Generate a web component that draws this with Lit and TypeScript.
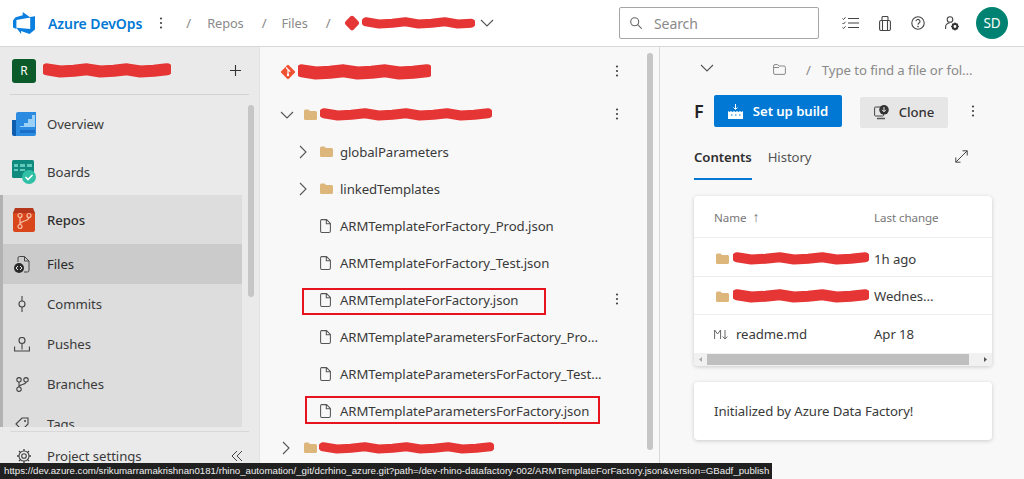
import { LitElement, html, css, svg } from "lit";
import { customElement } from "lit/decorators.js";

const icon = (w: number, h: number, body: unknown, cls = "") =>
  html`<svg class="ic ${cls}" width=${w} height=${h} viewBox="0 0 ${w} ${h}" fill="none">${body}</svg>`;

const scribble = (w: number, h = 13) => {
  const m = h / 2;
  const pts: string[] = [];
  const n = Math.floor(w / 14);
  for (let i = 0; i <= n; i++) {
    const x = 4 + ((w - 8) * i) / n;
    const y = m + (i % 3 === 0 ? -1.2 : i % 3 === 1 ? 1 : 0.2);
    pts.push(`${x.toFixed(1)} ${y.toFixed(1)}`);
  }
  return html`<svg class="scr" width=${w} height=${h} viewBox="0 0 ${w} ${h}" fill="none">
    ${svg`<path d="M${pts.join(" L")}" stroke="#e63535" stroke-width=${h - 3} stroke-linecap="round" stroke-linejoin="round"/>`}
  </svg>`;
};

const dots = () => icon(4, 14, svg`<circle cx="2" cy="2.5" r="1.1" fill="#444"/><circle cx="2" cy="7" r="1.1" fill="#444"/><circle cx="2" cy="11.5" r="1.1" fill="#444"/>`);
const chevR = () => icon(8, 14, svg`<path d="M1 1l6 6-6 6" stroke="#555" stroke-width="1.1"/>`);
const chevD = () => icon(14, 8, svg`<path d="M1 1l6 6 6-6" stroke="#555" stroke-width="1.1"/>`);
const folder = () => icon(13, 11, svg`<path d="M0 2a1.5 1.5 0 0 1 1.5-1.5h3L6 2h5.5A1.5 1.5 0 0 1 13 3.5v6a1.5 1.5 0 0 1-1.5 1.5h-10A1.5 1.5 0 0 1 0 9.5z" fill="#dcb67a"/>`);
const file = () => icon(11, 14, svg`<path d="M1.5.6h5L10.4 4.5v7.4a1.5 1.5 0 0 1-1.5 1.5h-7A1.5 1.5 0 0 1 .6 11.9V2A1.5 1.5 0 0 1 1.5.6zM6.3.8v3.9h4" stroke="#555" stroke-width="1.05"/>`);
const gitIcon = (s: number) => html`<svg class="ic" width=${s} height=${s} viewBox="0 0 16 16"><rect x="2.6" y="2.6" width="10.8" height="10.8" rx="1.2" transform="rotate(45 8 8)" fill="#f05133"/><path d="M6 3.5l4.2 4.2M8 6v5" stroke="#fff" stroke-width="1.2"/><circle cx="8" cy="11" r="1.2" fill="#fff"/></svg>`;

@customElement("app-root")
export class AppRoot extends LitElement {
  static styles = css`
    :host { display: block; width: 1024px; height: 479px; overflow: hidden; position: relative; font-family: "Noto Sans", "Open Sans", sans-serif; font-size: 13.2px; letter-spacing: -0.08px; color: #3a3a3a; background: #f8f8f8; }
    .ic, .scr { display: block; flex: none; }
    .top { height: 47px; box-sizing: border-box; background: #fff; border-bottom: 1px solid #d8d8d8; display: flex; align-items: center; padding-left: 13px; }
    .brand { color: #0078d4; font-weight: 600; font-size: 14px; margin-left: 13px; }
    .crumb { color: #8a8a8a; font-size: 12.8px; }
    .top .d1 { margin-left: 17px; }
    .sl { color: #8a8a8a; margin-left: 18px; margin-right: 15px; }
    .sl.a { margin-left: 23px; margin-right: 16px; }
    .sl.b { margin-right: 14px; }
    .red1 { display: flex; align-items: center; }
    .blob { width: 14px; height: 14px; background: #e63535; border-radius: 3px; transform: rotate(45deg) scale(.82); margin-right: 3px; }
    .rchev { margin-left: 5px; }
    .search { margin-left: auto; width: 200px; height: 32px; box-sizing: border-box; border: 1px solid #a6a6a6; border-radius: 2px; display: flex; align-items: center; padding-left: 10px; gap: 12px; color: #8a8a8a; font-size: 14px; }
    .actions { display: flex; align-items: center; gap: 20px; margin-left: 23px; }
    .avatar { width: 32px; height: 32px; border-radius: 50%; background: #008272; color: #fff; display: flex; align-items: center; justify-content: center; font-size: 13.5px; margin-left: -3px; margin-right: 16px; }
    .main { display: flex; height: 432px; }

    .side { width: 260px; flex: none; box-sizing: border-box; background: #eaeaea; border-right: 1px solid #e2e2e2; display: flex; flex-direction: column; position: relative; overflow: hidden; }
    .proj { height: 48px; box-sizing: border-box; flex: none; margin: 0 10px; border-bottom: 1px solid #d2d2d2; display: flex; align-items: center; padding: 0 0 0 2px; }
    .badge { width: 24px; height: 24px; border-radius: 3px; background: #0b5a2a; color: #fff; font-size: 12px; display: flex; align-items: center; justify-content: center; margin-right: 7px; }
    .plus { margin-left: auto; margin-right: 8px; }
    .nav { flex: none; height: 332px; box-sizing: border-box; padding-top: 5px; overflow: hidden; width: 242px; }
    .item { display: flex; align-items: center; height: 48px; padding-left: 11px; box-sizing: border-box; gap: 11px; }
    .item .slot { width: 25px; display: flex; justify-content: center; flex: none; }
    .group { background: #dddddd; border-left: 3px solid #b2b2b2; height: 232px; box-sizing: border-box; overflow: hidden; margin-top: -1px; padding-top: 1px; }
    .group .item { padding-left: 8px; }
    .group .sub { height: 40px; gap: 12px; padding-left: 6px; }
    .group .sub .slot { width: 26px; }
    .group .repos { font-weight: 500; color: #2f2f2f; }
    .group .files { background: #cbcbcb; margin-left: -3px; border-left: 3px solid #0078d4; height: 40px; color: #2a2a2a; }
    .foot { margin: 4px 10px 0; border-top: 1px solid #d8d8d8; height: 48px; flex: none; display: flex; align-items: center; gap: 16px; padding: 0 0 0 7px; }
    .foot .coll { margin-left: auto; margin-right: 7px; }
    .thumb { position: absolute; left: 248px; top: 58px; width: 6px; height: 192px; border-radius: 3px; background: #c6c6c6; }

    .tree { width: 400px; flex: none; box-sizing: border-box; border-right: 1px solid #d8d8d8; background: #f8f8f8; position: relative; overflow: hidden; padding-top: 6px; }
    .row { height: 37px; display: flex; align-items: center; position: relative; }
    .row .more { position: absolute; left: 355px; top: 11px; }
    .repo { height: 38px; padding-left: 20px; margin-bottom: 5px; gap: 2px; }
    .l0 { padding-left: 20px; gap: 10px; }
    .l0 .scr { margin-left: -7px; }
    .last { padding-left: 22px; gap: 14px; }
    .last .scr { margin-left: -12px; }
    .l1 { padding-left: 39px; gap: 13px; }
    .l1 span { margin-left: -6px; }
    .l2 { padding-left: 60px; gap: 9px; }
    .l2 span, .l1 span { white-space: nowrap; }
    .tthumb { position: absolute; left: 387px; top: 6px; width: 6px; height: 397px; border-radius: 3px; background: #c6c6c6; }
    .mark { position: absolute; border: 2px solid #e8131f; box-sizing: border-box; }
    .m1 { left: 42px; top: 241px; width: 244px; height: 27px; }
    .m2 { left: 45px; top: 349px; width: 295px; height: 28px; }

    .right { flex: 1; background: #f8f8f8; padding: 0 32px 0 34px; overflow: hidden; }
    .path { display: flex; align-items: center; height: 42px; color: #8a8a8a; padding-left: 6px; white-space: nowrap; }
    .path span { position: relative; top: 2px; }
    .path .fold { margin-left: 59px; top: 1px; }
    .path .s { margin: 0 11px 0 20px; }
    .titlebar { display: flex; align-items: center; height: 32px; margin-top: 6px; }
    .F { font-size: 18px; font-weight: 600; color: #222; width: 20px; }
    .build { width: 128px; height: 32px; border-radius: 2px; background: #0078d4; color: #fff; font-weight: 600; display: flex; align-items: center; justify-content: center; gap: 10px; box-sizing: border-box; }
    .clone { width: 88px; height: 31px; background: #e6e6e6; border-radius: 2px; margin-left: 18px; display: flex; align-items: center; justify-content: center; gap: 10px; font-weight: 500; color: #333; position: relative; top: 1px; }
    .titlebar .m { margin-left: 23px; }
    .tabs { display: flex; align-items: stretch; gap: 16px; height: 53px; }
    .tabs > span { padding-top: 21px; box-sizing: border-box; }
    .tabs .on { font-weight: 600; color: #2f2f2f; border-bottom: 2px solid #0078d4; }
    .tabs .exp { margin-left: auto; margin-right: 24px; padding-top: 23px; }
    .tabs > span:nth-child(2) { color: #555; }
    .card { background: #fff; border-radius: 4px; box-shadow: 0 1px 4px rgba(0,0,0,.18); overflow: hidden; width: 298px; }
    .c1 { margin-top: 16px; }
    .c2 { margin-top: 16px; height: 58px; display: flex; align-items: center; padding-left: 20px; box-sizing: border-box; }
    .hrow, .trow { display: grid; grid-template-columns: 160px 1fr; align-items: center; padding-left: 20px; }
    .hrow { height: 42px; padding-top: 1px; font-size: 11.6px; color: #777; border-bottom: 1px solid #ededed; box-sizing: border-box; }
    .arr { font-size: 14px; line-height: 1; margin-left: 6px; }
    .trow { height: 38px; padding-top: 1px; border-bottom: 1px solid #ededed; box-sizing: border-box; }
    .trow.first { height: 39px; padding-top: 3px; }
    .trow.lastr { border-bottom: 0; padding-top: 0; }
    .nm { display: flex; align-items: center; gap: 4px; }
    .nm .ic { margin-left: 2px; }
    .nm .scr { margin-left: 0; }
    .nm.md { gap: 7px; }
    .nm.md .ic { margin-left: 0; }
    .hbar { height: 13px; background: #f1f1f1; display: flex; align-items: center; }
    .hbar .t { margin: 0 10px 0 13px; flex: 1; height: 11px; background: #bfbfbf; }
    .hbar svg { flex: none; }
    .hbar .lft { margin-right: -13px; }
    .status { position: absolute; left: 0; bottom: 0; width: 772px; height: 16px; background: #202020; color: #eee; font-family: "Liberation Sans", Arial, sans-serif; letter-spacing: 0; font-size: 9.7px; line-height: 15px; padding-left: 4px; box-sizing: border-box; white-space: nowrap; overflow: hidden; }
  `;

  render() {
    const F = (name: string, more = false) => html`<div class="row l2">${file()}<span>${name}</span>${more ? html`<div class="more">${dots()}</div>` : ""}</div>`;
    return html`
      <header class="top">
        ${icon(22, 22, svg`<path d="M22 4.2v13.3l-5.5 4.5-8.4-3.1v3.1L3.4 15.8l13.8 1.1V5.1zM17.4 5.6L9.7 0v3.2L2.6 5.3 0 8.4v7l3.4 1.5V7.9z" fill="#0a7fe0"/>`)}
        <span class="brand">Azure DevOps</span>
        <span class="d1">${dots()}</span>
        <span class="sl a">/</span><span class="crumb">Repos</span>
        <span class="sl">/</span><span class="crumb">Files</span>
        <span class="sl b">/</span>
        <span class="red1"><span class="blob"></span>${scribble(113, 12)}</span>
        <span class="rchev">${chevD()}</span>
        <div class="search">
          ${icon(12, 12, svg`<circle cx="4.7" cy="4.7" r="4" stroke="#666" stroke-width="1.1"/><path d="M7.7 7.7l4 4" stroke="#666" stroke-width="1.1"/>`)}
          <span>Search</span>
        </div>
        <div class="actions">
          ${icon(17, 14, svg`<path d="M6 2.5h11M6 7h11M6 11.5h11" stroke="#444" stroke-width="1.1"/><path d="M.5 2.5l1 1 2-2.2M.5 7l1 1 2-2.2M.5 11.5l1 1 2-2.2" stroke="#444"/>`)}
          ${icon(12, 15, svg`<rect x=".6" y="4.5" width="10.8" height="10" rx="1.5" stroke="#444" stroke-width="1.1"/><path d="M3 4.5V1.5a1 1 0 0 1 1-1h4a1 1 0 0 1 1 1v3M3.5 4.5v10M8.5 4.5v10" stroke="#444" stroke-width="1.1"/>`)}
          ${icon(14, 14, svg`<circle cx="7" cy="7" r="6.2" stroke="#444" stroke-width="1.1"/><path d="M5 5.3a2 2 0 1 1 3 1.8c-.7.4-1 .8-1 1.6" stroke="#444" stroke-width="1.1"/><circle cx="7" cy="10.6" r=".8" fill="#444"/>`)}
          ${icon(14, 15, svg`<circle cx="5" cy="3.5" r="2.8" stroke="#444" stroke-width="1.1"/><path d="M.6 13v-2a4 4 0 0 1 4-4" stroke="#444" stroke-width="1.1"/><circle cx="10" cy="10.5" r="2.4" stroke="#333" stroke-width="2"/><path d="M10 6.6v1.2M10 13.2v1.2M6.1 10.5h1.2M12.7 10.5h1.2M7.3 7.8l.8.8M11.9 12.4l.8.8M7.3 13.2l.8-.8M11.9 8.6l.8-.8" stroke="#333" stroke-width="1.2"/>`)}
          <div class="avatar">SD</div>
        </div>
      </header>
      <div class="main">
        <aside class="side">
          <div class="proj">
            <div class="badge">R</div>${scribble(128, 15)}
            <span class="plus">${icon(11, 11, svg`<path d="M5.5 0v11M0 5.5h11" stroke="#333" stroke-width="1.1"/>`)}</span>
          </div>
          <nav class="nav">
            <div class="item"><span class="slot">${icon(24, 24, svg`<path d="M0 8h6v16H2a2 2 0 0 1-2-2z" fill="#0e5cad"/><path d="M4 2a2 2 0 0 1 2-2h18v22a2 2 0 0 1-2 2H4z" fill="#2b8be0"/><path d="M8 14h4v-3h4V7h4V3h3v12H8z" fill="#9cd0f7"/><path d="M8 18h15v3H8z" fill="#1c6fc6"/>`)}</span><span>Overview</span></div>
            <div class="item"><span class="slot">${icon(24, 24, svg`<rect width="22" height="18" rx="1.5" fill="#0f8a7e"/><path d="M2 4h4v3H2zM8 4h5v3H8zM15 4h5v3h-5zM2 9h4v2H2zM8 9h5v2H8z" fill="#62c9bb"/><circle cx="17" cy="17" r="7" fill="#2fc0a5"/><path d="M13.5 17l2.5 2.5 4.5-4.5" stroke="#fff" stroke-width="1.6"/>`)}</span><span>Boards</span></div>
            <div class="group">
              <div class="item repos"><span class="slot">${icon(22, 24, svg`<path d="M4 0h14l2 4h2v18a2 2 0 0 1-2 2H2a2 2 0 0 1-2-2V4h2z" fill="#d9461c"/><path d="M2 0h18l2 5H0z" fill="#b5361a"/><circle cx="7" cy="7.5" r="2" stroke="#f9c0a8" stroke-width="1.2"/><circle cx="16" cy="7.5" r="2" stroke="#f9c0a8" stroke-width="1.2"/><circle cx="7" cy="18.5" r="2" stroke="#f9c0a8" stroke-width="1.2"/><path d="M7 9.5v7M16 9.5c0 4-9 3-9 7" stroke="#f9c0a8" stroke-width="1.2"/>`)}</span><span>Repos</span></div>
              <div class="item sub files"><span class="slot">${icon(16, 17, svg`<path d="M4 6V2a1.5 1.5 0 0 1 1.5-1.5h5L15 5v9.5a1.5 1.5 0 0 1-1.5 1.5H10M10.500 .7V5H15" stroke="#444" stroke-width="1"/><circle cx="5" cy="12" r="5" fill="#2a2a2a"/><path d="M4 10l-2 2 2 2M6 10l2 2-2 2" stroke="#fff" stroke-width=".9"/>`)}</span><span>Files</span></div>
              <div class="item sub"><span class="slot">${icon(8, 16, svg`<circle cx="4" cy="8" r="3" stroke="#444" stroke-width="1.1"/><path d="M4 0v5M4 11v5" stroke="#444" stroke-width="1.1"/>`)}</span><span>Commits</span></div>
              <div class="item sub"><span class="slot">${icon(16, 15, svg`<circle cx="8" cy="3.500" r="3" stroke="#444" stroke-width="1.1"/><path d="M8 6.500v6M.6 9.500v4.500h14.800V9.500" stroke="#444" stroke-width="1.1"/>`)}</span><span>Pushes</span></div>
              <div class="item sub"><span class="slot">${icon(13, 15, svg`<circle cx="3" cy="2.800" r="2.200" stroke="#444" stroke-width="1.1"/><circle cx="10" cy="2.800" r="2.200" stroke="#444" stroke-width="1.1"/><circle cx="3" cy="12.200" r="2.200" stroke="#444" stroke-width="1.1"/><path d="M3 5v5M10 5c0 3-7 2-7 5" stroke="#444" stroke-width="1.1"/>`)}</span><span>Branches</span></div>
              <div class="item sub"><span class="slot">${icon(14, 14, svg`<path d="M1 7l6-6h6v6l-6 6z" stroke="#444" stroke-width="1.1"/><circle cx="10" cy="4" r="1" fill="#444"/>`)}</span><span>Tags</span></div>
            </div>
          </nav>
          <div class="foot">
            ${icon(14, 14, svg`<circle cx="7" cy="7" r="2.300" stroke="#444" stroke-width="1.1"/><circle cx="7" cy="7" r="5" stroke="#444" stroke-width="1.1"/><path d="M7 0v2M7 12v2M0 7h2M12 7h2M2 2l1.500 1.500M10.500 10.500L12 12M2 12l1.500-1.500M10.500 3.500L12 2" stroke="#444" stroke-width="1.3"/>`)}
            <span>Project settings</span>
            <span class="coll">${icon(10, 10, svg`<path d="M5 0L0 5l5 5M10 0L5 5l5 5" stroke="#444" stroke-width="1"/>`)}</span>
          </div>
          <div class="thumb"></div>
        </aside>

        <section class="tree">
          <div class="row repo">${gitIcon(16)}${scribble(133, 16)}<div class="more">${dots()}</div></div>
          <div class="row l0">${chevD()}${folder()}${scribble(172, 13)}<div class="more">${dots()}</div></div>
          <div class="row l1">${chevR()}${folder()}<span>globalParameters</span></div>
          <div class="row l1">${chevR()}${folder()}<span>linkedTemplates</span></div>
          ${F("ARMTemplateForFactory_Prod.json")}
          ${F("ARMTemplateForFactory_Test.json")}
          ${F("ARMTemplateForFactory.json", true)}
          ${F("ARMTemplateParametersForFactory_Pro...")}
          ${F("ARMTemplateParametersForFactory_Test...")}
          ${F("ARMTemplateParametersForFactory.json")}
          <div class="row last">${chevR()}${folder()}${scribble(175, 12)}</div>
          <div class="tthumb"></div>
          <div class="mark m1"></div>
          <div class="mark m2"></div>
        </section>

        <section class="right">
          <div class="path">
            ${chevD()}
            <span class="fold">${icon(13, 11, svg`<path d="M.6 2A1.400 1.400 0 0 1 2 .6h2.700L6 2h5a1.400 1.400 0 0 1 1.400 1.400V9A1.400 1.400 0 0 1 11 10.400H2A1.400 1.400 0 0 1 .6 9zM.6 3.500H6" stroke="#888" stroke-width="1"/>`)}</span>
            <span class="s">/</span>
            <span>Type to find a file or fol...</span>
          </div>
          <div class="titlebar">
            <span class="F">F</span>
            <div class="build">${icon(15, 15, svg`<path d="M7.500 0v5M5.500 3.500l2 2 2-2" stroke="#fff"/><path d="M0 7l1.500 1L3 7l1.500 1L6 7l1.500 1L9 7l1.500 1L12 7l1.500 1L15 7v8H0z" fill="#fff"/><path d="M3 11h1.500M7 11h1.500M11 11h1.500" stroke="#0078d4"/>`)}<span>Set up build</span></div>
            <div class="clone">${icon(15, 15, svg`<rect x=".6" y="2" width="9" height="9" rx="1" stroke="#444"/><circle cx="10" cy="4.800" r="4.800" fill="#333"/><path d="M10 2v4.500M8 4.800l2 2 2-2" stroke="#fff" stroke-width=".9"/><path d="M3 13.500h8" stroke="#555" stroke-width="1.500"/>`)}<span>Clone</span></div>
            <span class="m">${dots()}</span>
          </div>
          <div class="tabs">
            <span class="on">Contents</span><span>History</span>
            <span class="exp">${icon(13, 13, svg`<path d="M.8 12.200L12.200.8M7.500.8h4.700v4.700M.8 7.500v4.700h4.700" stroke="#444" stroke-width="1"/>`)}</span>
          </div>
          <div class="card c1">
            <div class="hrow"><span>Name<span class="arr">↑</span></span><span>Last change</span></div>
            <div class="trow first"><div class="nm">${folder()}${scribble(136, 13)}</div><span>1h ago</span></div>
            <div class="trow"><div class="nm">${folder()}${scribble(136, 14)}</div><span>Wednes...</span></div>
            <div class="trow lastr"><div class="nm md">${icon(15, 11, svg`<path d="M.6 10V1l3 4 3-4v9M11 1v9M8.700 7.500L11 10l2.300-2.500" stroke="#666" stroke-width="1"/>`)}<span>readme.md</span></div><span>Apr 18</span></div>
            <div class="hbar">
              <svg class="lft" width="13" height="13" viewBox="0 0 13 13"><path d="M8 4v5L5 6.500z" fill="#aaa"/></svg>
              <div class="t"></div>
              <svg width="13" height="13" viewBox="0 0 13 13"><path d="M5 4v5l3-2.500z" fill="#555"/></svg>
            </div>
          </div>
          <div class="card c2">Initialized by Azure Data Factory!</div>
        </section>
      </div>
      <div class="status">https://dev.azure.com/srikumarramakrishnan0181/rhino_automation/_git/dcrhino_azure.git?path=/dev-rhino-datafactory-002/ARMTemplateForFactory.json&amp;version=GBadf_publish</div>
    `;
  }
}
